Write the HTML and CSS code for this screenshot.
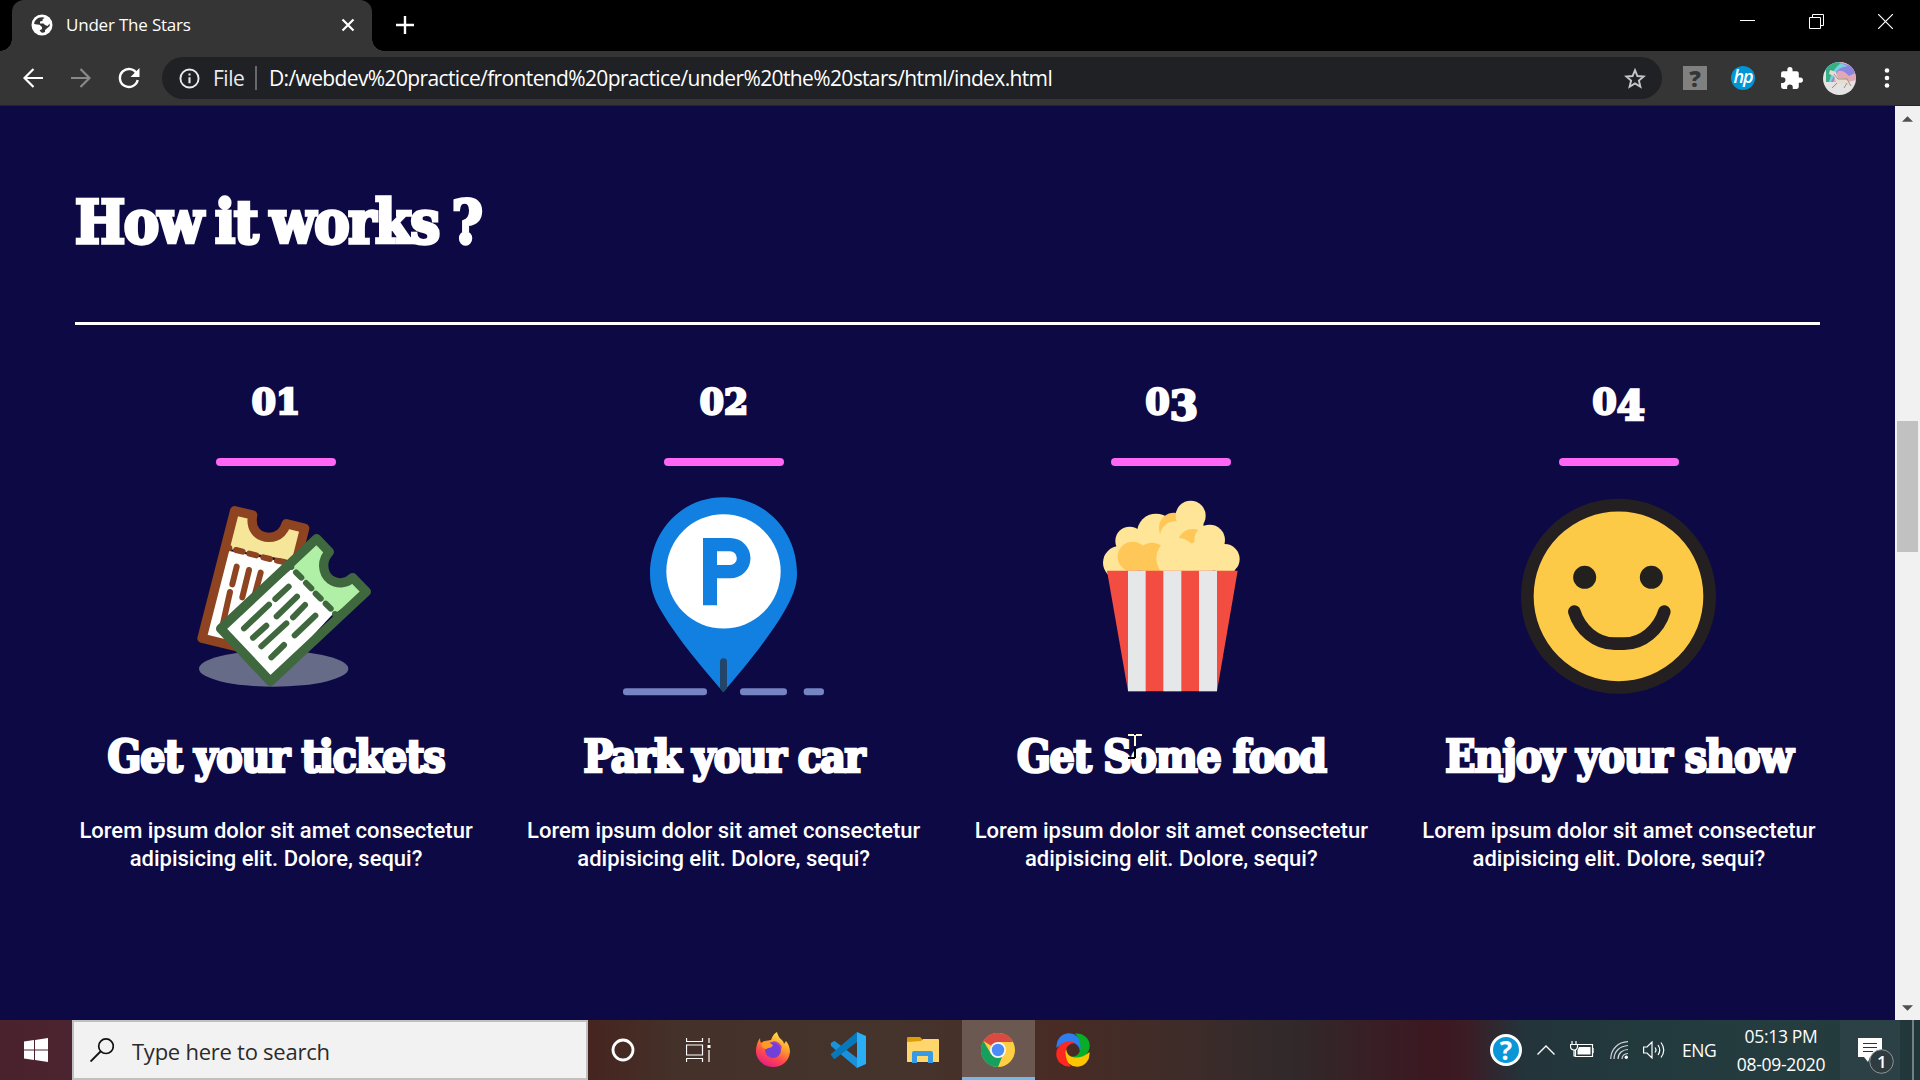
FILE: index.html
```html
<!DOCTYPE html>
<html lang="en">
<head>
<meta charset="utf-8">
<title>Under The Stars</title>
<link rel="stylesheet" href="styles.css">
</head>
<body>
<div class="screen">
  <header class="tabstrip">
    <div class="tab">
      <svg class="favicon" viewBox="0 0 22 22" width="22" height="22"><circle cx="11" cy="11" r="10.5" fill="#fff"/><path d="M11.500 3.200C6.500 3 3.200 6.500 3.200 10L6 10.500L8.500 10.800L11 13V15L8.500 16.500L10.500 18.600Q12.500 18.800 14 18V16L17 13.500L18.700 12V9.500L16.500 12L14 11L12.500 9.500H9V7.500L11.500 7V5.500L13.500 3.800Z" fill="#353535"/></svg>
      <span class="tab-title">Under The Stars</span>
      <svg class="tab-close" viewBox="0 0 14 14" width="14" height="14"><path d="M1.500 1.500L12.500 12.500M12.500 1.500L1.500 12.500" stroke="#fff" stroke-width="2.200"/></svg>
    </div>
    <svg class="new-tab" viewBox="0 0 18 18" width="18" height="18"><path d="M9 0V18M0 9H18" stroke="#fff" stroke-width="2.400"/></svg>
    <div class="window-controls">
      <span class="control"><svg viewBox="0 0 15 15" width="15" height="15"><path d="M0 6.500H15" stroke="#fff"/></svg></span>
      <span class="control"><svg viewBox="0 0 15 15" width="15" height="15"><path d="M.5 3.500H11.500V14.500H.5ZM3.500 3.500V.5H14.500V11.500H11.500" fill="none" stroke="#fff"/></svg></span>
      <span class="control"><svg viewBox="0 0 15 15" width="15" height="15"><path d="M0 0L15 15M15 0L0 15" stroke="#fff" stroke-width="1.200"/></svg></span>
    </div>
  </header>

  <nav class="toolbar">
    <span class="tool"><svg viewBox="0 0 20 20" width="20" height="20"><path d="M20 10H2M10.500 1L1.500 10L10.500 19" fill="none" stroke="#fff" stroke-width="2.200"/></svg></span>
    <span class="tool"><svg viewBox="0 0 20 20" width="20" height="20"><path d="M0 10H18M9.500 1L18.500 10L9.500 19" fill="none" stroke="#898989" stroke-width="2.200"/></svg></span>
    <span class="tool"><svg viewBox="0 0 22 22" width="22" height="22"><path d="M19 7A9 9 0 1 0 19.700 13" fill="none" stroke="#fff" stroke-width="2.400"/><path d="M21.500 1V10H12.500Z" fill="#fff"/></svg></span>
    <div class="omnibox">
      <svg class="info" viewBox="0 0 22 22" width="21" height="21"><circle cx="11" cy="11" r="9.500" fill="none" stroke="#e8eaed" stroke-width="2"/><path d="M11 9.700V16M11 5.700V7.900" stroke="#e8eaed" stroke-width="2.200"/></svg>
      <span class="scheme">File</span>
      <span class="divider"></span>
      <span class="url">D:/webdev%20practice/frontend%20practice/under%20the%20stars/html/index.html</span>
      <svg class="star" viewBox="0 0 22 21" width="22" height="21"><path d="M11 2.200L13.400 8L19.700 8.500L14.900 12.600L16.400 18.700L11 15.400L5.600 18.700L7.100 12.600L2.300 8.500L8.600 8Z" fill="none" stroke="#c4c6ca" stroke-width="1.900"/></svg>
    </div>
    <span class="tool"><span class="ext-unknown">?</span></span>
    <span class="tool"><span class="ext-hp">hp</span></span>
    <span class="tool"><svg viewBox="0 0 24 24" width="25" height="25"><path d="M20.500 11H19V7a2 2 0 0 0-2-2h-4V3.500a2.500 2.500 0 0 0-5 0V5H4a2 2 0 0 0-2 2v3.800h1.500a2.700 2.700 0 0 1 0 5.400H2V20a2 2 0 0 0 2 2h3.800v-1.500a2.700 2.700 0 0 1 5.400 0V22H17a2 2 0 0 0 2-2v-4h1.500a2.500 2.500 0 0 0 0-5z" fill="#fff"/></svg></span>
    <span class="tool"><svg class="avatar" viewBox="0 0 33 33" width="33" height="33"><rect width="33" height="33" fill="#e4e3e4"/><path d="M3 20A16 18 0 0 1 19 0L33 3V18L25 20Z" fill="#dfa9b8"/><path d="M3 20V5L14 0L29 4L32 11L26 14Q21 8 15 9L10 20Z" fill="#8b86e2"/><path d="M3 20V4L14 0L25 4Q15 5 12 12L8 20Z" fill="#78d0dc"/><path d="M3 20V4L13 0L18 1Q9 7 6 20Z" fill="#36ae86"/><path d="M7 8L13 10L15 16L23 17L27 20L26 25L22 22L15 22L11 26L9 25L13 20L11 14L6 12Z" fill="#e6dcd2"/><path d="M11 12L15 17L24 17L28 24M14 21L9 26M24 21L21 26" stroke="#a78e7a" fill="none"/></svg></span>
    <span class="tool"><svg viewBox="0 0 6 22" width="6" height="22"><g fill="#fff"><circle cx="3" cy="3.500" r="2.300"/><circle cx="3" cy="11" r="2.300"/><circle cx="3" cy="18.500" r="2.300"/></g></svg></span>
  </nav>

  <div class="viewport">
    <main class="page">
      <h2 class="heading">How it works ?</h2>
      <hr class="rule">
      <div class="steps">
        <section class="step">
          <div class="number">01</div>
          <div class="bar"></div>
          <svg class="art" viewBox="-12 51 600 600">
            <ellipse cx="281" cy="566" rx="224" ry="54" fill="#666b88"/>
            <path d="M145 212L330 250L175 498L66 475Z" fill="#fff"/>
            <path d="M164 92L218 105C210 145 232 172 267 172C300 172 314 148 319 131L374 145L350 245L145 206Z" fill="#f6e69a"/>
            <path d="M190 505L66 475L164 92L218 105C210 145 232 172 267 172C300 172 314 148 319 131L374 145L350 240" fill="none" stroke="#8e4420" stroke-width="28" stroke-linejoin="round"/>
            <g fill="none" stroke="#8e4420" stroke-width="18" stroke-linecap="round"><path d="M148 204V205M168 210L188 215M208 221L229 226M250 232L270 237M291 242L312 246M170 260L157 313M207 270L187 352M242 278L224 345M150 336L129 430"/></g>
            <path d="M342 260L462 398L271 604L122 446Z" fill="#fff"/>
            <path d="M410 176L448 216C424 240 426 279 451 299C475 315 502 309 518 293L559 335L462 403L335 258Z" fill="#b0f0a6"/>
            <path d="M410 176L448 216C424 240 426 279 451 299C475 315 502 309 518 293L559 335L271 604L122 446Z" fill="none" stroke="#3f683e" stroke-width="28" stroke-linejoin="round"/>
            <g fill="none" stroke="#3f683e" stroke-width="18" stroke-linecap="round"><path d="M334 260V261M348 277L364 293M378 309L394 325M407 341L422 356M437 371L452 386M465 402V403M326 320L286 357M351 350L290 409M267 374L192 445M375 375L339 412M406 407L344 466M259 437L219 473M319 430L244 499M312 495L274 532"/></g>
          </svg>
          <h3 class="title tickets">Get your tickets</h3>
          <p class="copy">Lorem ipsum dolor sit amet consectetur<br>adipisicing elit. Dolore, sequi?</p>
        </section>
        <section class="step">
          <div class="number">02</div>
          <div class="bar"></div>
          <svg class="art" viewBox="72 50 600 600">
            <path d="M370 636C315 571 235 480 184 393C161 354 150 320 150 280C150 150 247 51 370 51S591 150 591 280C591 320 575 354 553 393C505 476 425 571 370 636Z" fill="#1280e1"/>
            <circle cx="370.500" cy="273" r="171.500" fill="#fff"/>
            <path fill-rule="evenodd" d="M309 173H391A60 60 0 0 1 391 294H351V375H309ZM351 213V254H390A20.500 20.500 0 0 0 390 213Z" fill="#1280e1"/>
            <path d="M360 544A10 10 0 0 1 381 544V624L370 636L360 624Z" fill="#234569"/>
            <g fill="#7584c2"><rect x="69" y="624" width="252" height="21" rx="10"/><rect x="420" y="624" width="141" height="21" rx="10"/><rect x="611" y="624" width="61" height="21" rx="10"/></g>
          </svg>
          <h3 class="title park">Park your car</h3>
          <p class="copy">Lorem ipsum dolor sit amet consectetur<br>adipisicing elit. Dolore, sequi?</p>
        </section>
        <section class="step">
          <div class="number">0<span class="low">3</span></div>
          <div class="bar"></div>
          <svg class="art" viewBox="-27 52 600 600">
            <g fill="#ffe597"><circle cx="119" cy="249" r="50"/><circle cx="149" cy="184" r="43"/><circle cx="228" cy="159" r="57"/></g>
            <circle cx="282" cy="144" r="45" fill="#ffc757"/>
            <g fill="#ffe597"><circle cx="332" cy="108" r="45"/><circle cx="286" cy="171" r="46"/><path d="M330 130H370L380 273H280Z"/></g>
            <circle cx="338" cy="193" r="45" fill="#ffc757"/>
            <g fill="#ffe597"><circle cx="389" cy="181" r="46"/><circle cx="434" cy="238" r="45"/><path d="M190 190L240 170L300 200L330 198L350 185L390 220L466 273H130Z"/></g>
            <g fill="#ffc757"><circle cx="158" cy="231" r="45"/><circle cx="216" cy="236" r="47"/></g>
            <circle cx="291" cy="236" r="62" fill="#ffe597"/><path d="M320 198L350 185L400 273H300Z" fill="#ffe597"/>
            <path d="M81 273H473L411 635H144Z" fill="#f24d40"/>
            <path d="M144 273H197V635H144ZM250 273H304V635H250ZM357 273H411V635H357Z" fill="#e6e7e9"/>
          </svg>
          <h3 class="title food">Get Some food</h3>
          <p class="copy">Lorem ipsum dolor sit amet consectetur<br>adipisicing elit. Dolore, sequi?</p>
        </section>
        <section class="step">
          <div class="number">0<span class="low">4</span></div>
          <div class="bar"></div>
          <svg class="art" viewBox="57 171 600 600">
            <circle cx="355.500" cy="469" r="273.500" fill="#fdca47" stroke="#241f20" stroke-width="38"/>
            <circle cx="254" cy="412" r="34.500" fill="#22211e"/><circle cx="454" cy="412" r="34.500" fill="#22211e"/>
            <path d="M223 515C239 568 288 611 344 611H372C428 611 477 568 493 515" fill="none" stroke="#241f20" stroke-width="38" stroke-linecap="round"/>
          </svg>
          <h3 class="title show">Enjoy your show</h3>
          <p class="copy">Lorem ipsum dolor sit amet consectetur<br>adipisicing elit. Dolore, sequi?</p>
        </section>
      </div>
    </main>
    <aside class="scrollbar">
      <svg viewBox="0 0 12 6" width="11" height="6"><path d="M0 6L6 0L12 6Z" fill="#505050"/></svg>
      <div class="track"><div class="thumb"></div></div>
      <svg viewBox="0 0 12 6" width="11" height="6"><path d="M0 0L6 6L12 0Z" fill="#505050"/></svg>
    </aside>
  </div>

  <footer class="taskbar">
    <span class="start"><svg viewBox="0 0 24 24" width="24" height="24"><path d="M0 3.500L10 2V11.500H0ZM11 1.900L24 0V11.500H11ZM0 12.500H10V22L0 20.500ZM11 12.500H24V24L11 22.100Z" fill="#fff"/></svg></span>
    <div class="search">
      <svg viewBox="0 0 24 24" width="24" height="24"><circle cx="16" cy="8.200" r="7.300" fill="none" stroke="#111" stroke-width="1.700"/><path d="M10.500 13.500L.5 23.500" stroke="#111" stroke-width="1.900"/></svg>
      <span class="search-text">Type here to search</span>
    </div>
    <span class="app"><svg viewBox="0 0 24 24" width="24" height="24"><circle cx="12" cy="12" r="10" fill="none" stroke="#fff" stroke-width="2.800"/></svg></span>
    <span class="app"><svg viewBox="0 0 25 24" width="25" height="24"><path d="M.5 0V3.500H16.500V0M.5 7H16.500V17H.5ZM.5 24V20.500H16.500V24M23 0V5M23 12V24" fill="none" stroke="#fff" stroke-width="1.200"/><rect x="21.500" y="7" width="3" height="3" fill="#fff"/></svg></span>
    <span class="app"><svg viewBox="0 0 36 36" width="36" height="36">
      <defs><linearGradient id="ff" x1=".8" y1="0" x2=".3" y2="1"><stop offset="0" stop-color="#fff14a"/><stop offset=".4" stop-color="#ff9a2c"/><stop offset=".7" stop-color="#ff4650"/><stop offset="1" stop-color="#e31b87"/></linearGradient></defs>
      <path d="M5 6Q5 9 6 11Q8 9 10 9L16 8Q18 2 22 0Q23 5 27 8Q29 10 29 12L31 9Q35 14 35 20C34 29 27 35 18 35S1 28 1 19Q1 12 5 6Z" fill="url(#ff)"/><circle cx="18" cy="18" r="8" fill="#7240d8"/><path d="M6 11L13 9Q16 12 18 13Q17 16 13 16Q10 19 7 14Z" fill="#ff9b24"/><path d="M17 9Q26 9 27 17L22 12Z" fill="#b63ccc"/></svg></span>
    <span class="app"><svg viewBox="0 0 36 36" width="36" height="36"><path d="M1 13Q0 12 1 11L4 9Q5 9 6 10L27 26V36L1 14Z" fill="#1b91da"/><path d="M1 23L4 27Q5 27 6 26L27 10V0L1 22Z" fill="#0878bd"/><path d="M27 0L36 4V32L27 36Z" fill="#2aaef5"/></svg></span>
    <span class="app"><svg viewBox="0 0 32 28" width="32" height="28"><path d="M0 2Q0 1 1 1H13L15 3V6H0Z" fill="#dc9d08"/><path d="M0 6L14 5L16 3H31Q32 3 32 4V26H0Z" fill="#ffd66c"/><path d="M5 27V17Q5 15 7 15H24Q26 15 26 17V27H21V20H10V27Z" fill="#369be4"/></svg></span>
    <span class="app active"><svg viewBox="0 0 34 34" width="34" height="34"><circle cx="17" cy="17" r="17" fill="#ffcf43"/><path d="M17 17L2.500 8A17 17 0 0 1 32 9H17Z" fill="#db4a40"/><path d="M17 34A17 17 0 0 1 2.500 8L10 21L21 24Z" fill="#16a05d"/><circle cx="17" cy="17" r="8" fill="#f5f5f5"/><circle cx="17" cy="17" r="6.200" fill="#4a8bf5"/></svg></span>
    <span class="app"><svg viewBox="0 0 34 34" width="34" height="34">
      <defs><path id="petal" d="M.5 13.500A12.500 12.500 0 0 1 25.500 12Q26 16 24 19Q23.500 10.500 15.500 9.500Q7 9 .5 15Z"/></defs>
      <use href="#petal" fill="#2e7df1"/><use href="#petal" fill="#08ad28" transform="rotate(90 17 17)"/><use href="#petal" fill="#ffc400" transform="rotate(180 17 17)"/><use href="#petal" fill="#fd2821" transform="rotate(270 17 17)"/></svg></span>
    <div class="tray">
      <span class="help">?</span>
      <svg class="chevron" viewBox="0 0 18 10" width="18" height="10"><path d="M.5 9.500L9 1L17.500 9.500" fill="none" stroke="#fff" stroke-width="1.400"/></svg>
      <svg class="battery" viewBox="0 0 24 18" width="24" height="18"><path d="M8 3.500H22.500V15.500H5.500V9M24 7V12M2 0V3M6 0V3M.5 3.500H7.500V6Q7 9 4 9Q.5 9 .5 5ZM4 9V15H6" fill="none" stroke="#fff" stroke-width="1.200"/><path d="M9 6H20.500V13.500H7.500V9Z" fill="#fff"/></svg>
      <svg class="wifi" viewBox="0 0 18 18" width="18" height="18"><path d="M.7 18C1 8 8 1 18 .7M4 18C4 10 10 5 18 4.500M8 18C8 12 13 8.500 18 8.500M12 18Q12 13 18 12.500" fill="none" stroke="#cfd6d7" stroke-width="1.200"/><circle cx="16.300" cy="16.300" r="1.700" fill="#fff"/></svg>
      <svg class="volume" viewBox="0 0 22 18" width="22" height="18"><path d="M.6 6V12H4L9 17V1L4 6ZM12 6.500Q14 9 12 11.500M15 4Q18.500 9 15 14M18 1.500Q23.500 9 18 16.500" fill="none" stroke="#fff" stroke-width="1.200"/></svg>
      <span class="lang">ENG</span>
      <div class="clock"><span class="time">05:13 PM</span><span class="date">08-09-2020</span></div>
      <div class="action"><svg viewBox="0 0 38 38" width="38" height="38"><path d="M1 1H25V20H13L11 25L7 20H1Z" fill="#fff"/><path d="M6 6.500H20M6 10.500H20M6 14.500H16" stroke="#26363a" stroke-width="1.200"/><circle cx="24.500" cy="24.500" r="11.800" fill="#303b40" stroke="#8b9394"/></svg><span class="count">1</span></div>
      <span class="peek"></span>
    </div>
  </footer>
  <svg class="cursor" viewBox="0 0 14 25" width="14" height="25"><path d="M0 1H6M8 1H14M7 1V12" stroke="#fffbd0" stroke-width="2"/><path d="M7 13V24M0 24H7" stroke="#000" stroke-width="2"/><path d="M8 24H14" stroke="#fffbd0" stroke-width="2"/></svg>
</div>
</body>
</html>
```
FILE: styles.css
```css
* { box-sizing: border-box; }
body { margin: 0; background: #0d0945; font-family: "Open Sans", "Noto Sans", sans-serif; color: #fff; }
svg { display: block; flex: none; }
.screen { position: relative; width: 1920px; height: 1080px; display: flex; flex-direction: column; overflow: hidden; }

.tabstrip { height: 51px; background: #000; display: flex; align-items: center; padding-left: 12px; flex: none; }
.tab { position: relative; width: 360px; height: 51px; padding: 0 17px 2px 19px; background: #353535; border-radius: 12px 12px 0 0; display: flex; align-items: center; }
.tab::before, .tab::after { content: ""; position: absolute; bottom: 0; width: 12px; height: 12px; }
.tab::before { left: -12px; background: radial-gradient(circle at 0 0, transparent 11.5px, #353535 12px); }
.tab::after { right: -12px; background: radial-gradient(circle at 100% 0, transparent 11.5px, #353535 12px); }
.tab-title { margin-left: 13px; font-size: 17px; letter-spacing: -0.2px; line-height: 24px; white-space: nowrap; }
.tab-close { margin-left: auto; }
.new-tab { margin-left: 24px; margin-bottom: 1px; }
.window-controls { margin-left: auto; display: flex; height: 43px; align-self: flex-start; }
.control { width: 69px; display: flex; align-items: center; justify-content: center; }

.toolbar { height: 55px; background: #353535; border-bottom: 1px solid #252525; display: flex; align-items: center; padding: 0 9px; flex: none; }
.tool { width: 48px; height: 54px; display: flex; align-items: center; justify-content: center; flex: none; }
.omnibox { flex: 1; height: 42px; margin: 0 9px; padding: 0 16px 0 17px; border-radius: 21px; background: #202125; display: flex; align-items: center; white-space: nowrap; font-size: 21px; line-height: 30px; }
.scheme { width: 42px; margin-left: 13px; letter-spacing: -0.5px; color: #e8eaed; }
.divider { width: 2px; height: 24px; background: #66686b; }
.url { margin-left: 12px; letter-spacing: -0.63px; }
.star { margin-left: auto; }
.ext-unknown { width: 24px; height: 24px; background: #808080; color: #353535; font: 800 23px/24px "Open Sans", sans-serif; text-align: center; }
.ext-hp { width: 24px; height: 24px; border-radius: 50%; background: #0096d6; font: italic 600 18px/20px "Open Sans", sans-serif; letter-spacing: -1px; text-align: center; }
.avatar { border-radius: 50%; }

.viewport { height: 914px; display: flex; flex: none; }
.page { flex: 1; padding: 77px 75px 0; background: #0d0945; }
.heading, .number, .title { font-family: "DejaVu Serif Condensed", "DejaVu Serif", serif; font-stretch: condensed; font-weight: 700; white-space: nowrap; }
.heading { margin: 0; font-size: 59px; line-height: 80px; letter-spacing: -1.4px; word-spacing: -4px; -webkit-text-stroke: 3.4px #fff; }
.rule { height: 3px; margin: 59px 0 57px; border: 0; background: #fff; }
.steps { display: grid; grid-template-columns: repeat(4, 1fr); column-gap: 45.5px; }
.step { display: flex; flex-direction: column; align-items: center; min-width: 0; }
.number { height: 40px; font-size: 35px; line-height: 40px; transform: scaleX(1.1); -webkit-text-stroke: 2.4px #fff; }
.low { position: relative; top: 6px; font-size: 41px; line-height: 0; }
.bar { width: 120px; height: 8px; margin: 36px 0 31px; border-radius: 4px; background: #ff66f5; }
.art { width: 200px; height: 200px; overflow: visible; }
.title { margin: 35px 0 35px; font-size: 44px; line-height: 50px; -webkit-text-stroke: 2.6px #fff; }
.tickets { letter-spacing: -1.1px; }
.park { letter-spacing: -1.5px; }
.food { letter-spacing: -1.2px; }
.show { letter-spacing: -0.9px; }
.copy { margin: 0; font: 500 22px/28px Roboto, sans-serif; letter-spacing: 0; text-align: center; white-space: nowrap; }

.scrollbar { width: 25px; padding: 10px 2px 9px; background: #f1f1f1; display: flex; flex-direction: column; align-items: center; }
.track { flex: 1; width: 21px; padding-top: 299px; }
.thumb { height: 131px; background: #c1c1c1; }

.taskbar { height: 60px; display: flex; flex: none; background: linear-gradient(90deg, #4a222e 0, #4a2430 72px, #46241f 588px, #44322a 680px, #45342c 900px, #482b24 1060px, #3e2c29 1180px, #31292b 1290px, #3c1821 1430px, #3c1b24 1465px, #23343b 1525px, #223a3d 1650px, #263d40 1800px, #203639 1920px); }
.start { width: 72px; display: flex; align-items: center; justify-content: center; }
.search { width: 516px; border: 2px solid #c0c0c0; background: #f2f2f2; padding-left: 16px; display: flex; align-items: center; color: #2b2b2b; }
.search-text { margin-left: 18px; font-size: 22px; line-height: 30px; letter-spacing: -0.25px; white-space: nowrap; padding-top: 1px; }
.app { width: 75px; display: flex; align-items: center; justify-content: center; padding-right: 5px; }
.active { width: 73px; margin: 0 1px; margin-left: -1px; margin-right: 3px; background: #6b5851; border-bottom: 3px solid #77b8ea; padding: 3px 2px 0 0; }
.tray { flex: 1; display: flex; align-items: center; justify-content: flex-end; }
.help { width: 32px; height: 32px; border: 3px solid #fff; border-radius: 50%; background: #0b96d8; font: 700 26px/26px "Open Sans", sans-serif; text-align: center; }
.chevron { margin-left: 15px; }
.battery { margin-left: 15px; }
.wifi { margin-left: 16px; }
.volume { margin-left: 15px; }
.lang { margin-left: 17px; width: 40px; font-size: 17.5px; letter-spacing: -0.5px; }
.clock { width: 118px; display: flex; flex-direction: column; align-items: center; font-size: 17.5px; line-height: 28px; letter-spacing: -0.3px; white-space: nowrap; }
.action { position: relative; width: 60px; height: 60px; padding: 17px 0 0 17px; background: #2c4145; }
.count { position: absolute; left: 37px; top: 30px; font-size: 17px; line-height: 23px; font-weight: 600; }
.peek { width: 2px; height: 60px; margin: 0 6px 0 12px; background: #728083; }
.cursor { position: absolute; left: 1128px; top: 734px; }
```
